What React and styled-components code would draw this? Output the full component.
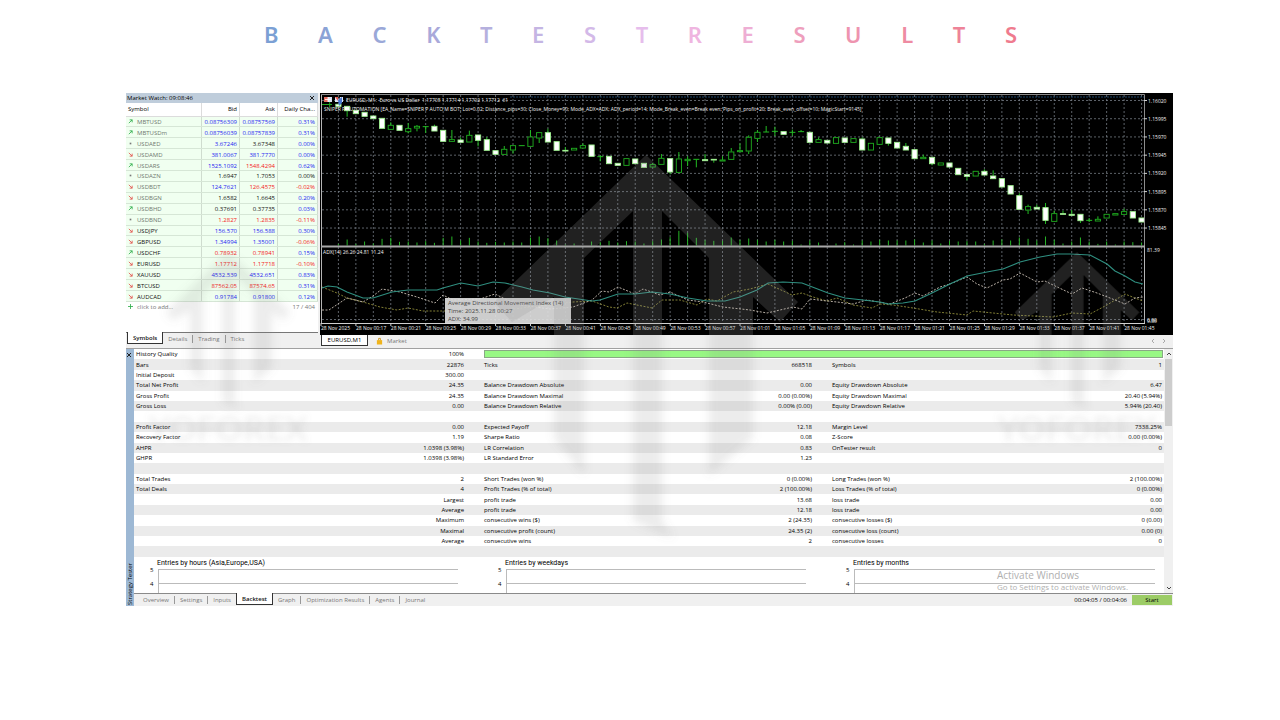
import React, { useState } from 'react'
import styled, { createGlobalStyle, css } from 'styled-components'

const titleLetters = [
  ['B', '#7ba0d4'], ['A', '#8ba3d6'], ['C', '#9aa8d8'], ['K', '#a9a9da'], ['T', '#b5b0de'],
  ['E', '#c4b5e3'], ['S', '#d3b9e8'], ['T', '#e6bdec'], ['R', '#efb5e0'], ['E', '#eeaed4'],
  ['S', '#ee9fbd'], ['U', '#ee94af'], ['L', '#ee8ba2'], ['T', '#ee8398'], ['S', '#ef7b8e'],
]

// symbol, direction, bid, ask, change, bid colour, ask colour, change colour, muted
const quotes = [
  ['MBTUSD', 'up', '0.08756309', '0.08757569', '0.31%', 'b', 'b', 'b', true],
  ['MBTUSDm', 'up', '0.08756039', '0.08757839', '0.31%', 'b', 'b', 'b', true],
  ['USDAED', 'flat', '3.67246', '3.67348', '0.00%', 'b', 'k', 'b', true],
  ['USDAMD', 'down', '381.0067', '381.7770', '0.00%', 'b', 'b', 'b', true],
  ['USDARS', 'up', '1525.1092', '1548.4294', '0.62%', 'b', 'r', 'b', true],
  ['USDAZN', 'flat', '1.6947', '1.7053', '0.00%', 'k', 'k', 'k', true],
  ['USDBDT', 'down', '124.7621', '126.4575', '-0.02%', 'b', 'r', 'r', true],
  ['USDBGN', 'down', '1.6582', '1.6645', '0.20%', 'k', 'k', 'b', true],
  ['USDBHD', 'up', '0.37691', '0.37735', '0.03%', 'k', 'k', 'b', true],
  ['USDBND', 'flat', '1.2827', '1.2835', '-0.11%', 'r', 'r', 'r', true],
  ['USDJPY', 'down', '156.570', '156.588', '0.30%', 'b', 'b', 'b'],
  ['GBPUSD', 'down', '1.34994', '1.35001', '-0.06%', 'b', 'b', 'r'],
  ['USDCHF', 'up', '0.78932', '0.78941', '0.15%', 'r', 'r', 'b'],
  ['EURUSD', 'down', '1.17712', '1.17718', '-0.10%', 'r', 'r', 'r'],
  ['XAUUSD', 'down', '4532.539', '4532.651', '0.83%', 'b', 'b', 'b'],
  ['BTCUSD', 'down', '87562.05', '87574.65', '0.31%', 'r', 'r', 'b'],
  ['AUDCAD', 'down', '0.91784', '0.91800', '0.12%', 'b', 'b', 'b'],
]

const stats = [
  ['Bars', '22876', 'Ticks', '668518', 'Symbols', '1'],
  ['Initial Deposit', '300.00', '', '', '', ''],
  ['Total Net Profit', '24.35', 'Balance Drawdown Absolute', '0.00', 'Equity Drawdown Absolute', '6.47'],
  ['Gross Profit', '24.35', 'Balance Drawdown Maximal', '0.00 (0.00%)', 'Equity Drawdown Maximal', '20.40 (5.94%)'],
  ['Gross Loss', '0.00', 'Balance Drawdown Relative', '0.00% (0.00)', 'Equity Drawdown Relative', '5.94% (20.40)'],
  ['', '', '', '', '', ''],
  ['Profit Factor', '0.00', 'Expected Payoff', '12.18', 'Margin Level', '7338.25%'],
  ['Recovery Factor', '1.19', 'Sharpe Ratio', '0.08', 'Z-Score', '0.00 (0.00%)'],
  ['AHPR', '1.0398 (3.98%)', 'LR Correlation', '0.83', 'OnTester result', '0'],
  ['GHPR', '1.0398 (3.98%)', 'LR Standard Error', '1.23', '', ''],
  ['', '', '', '', '', ''],
  ['Total Trades', '2', 'Short Trades (won %)', '0 (0.00%)', 'Long Trades (won %)', '2 (100.00%)'],
  ['Total Deals', '4', 'Profit Trades (% of total)', '2 (100.00%)', 'Loss Trades (% of total)', '0 (0.00%)'],
  ['', 'Largest', 'profit trade', '13.68', 'loss trade', '0.00'],
  ['', 'Average', 'profit trade', '12.18', 'loss trade', '0.00'],
  ['', 'Maximum', 'consecutive wins ($)', '2 (24.35)', 'consecutive losses ($)', '0 (0.00)'],
  ['', 'Maximal', 'consecutive profit (count)', '24.35 (2)', 'consecutive loss (count)', '0.00 (0)'],
  ['', 'Average', 'consecutive wins', '2', 'consecutive losses', '0'],
  ['', '', '', '', '', ''],
]

// f = filled, h = hollow, d = doji; then top, bottom, high, low
const candles = [
  ['f', 48, 56], ['f', 54, 69, 54, 86], ['f', 66, 78], ['f', 72, 86], ['f', 83, 93],
  ['f', 90, 122], ['h', 111, 125, 103], ['f', 111, 128], ['h', 121, 132, 105, 136], ['h', 114, 121, 111, 130],
  ['d', 116, 117, 114, 135], ['f', 114, 130, 110], ['f', 126, 161], ['h', 154, 161, 126], ['f', 155, 164, 148],
  ['h', 141, 163, 128], ['f', 140, 158, 140, 175], ['f', 154, 188, 147], ['f', 187, 200], ['h', 183, 200, 174],
  ['h', 172, 187, 172, 197], ['d', 173, 174], ['h', 146, 176, 126], ['h', 133, 151, 133, 165], ['f', 133, 163, 122],
  ['f', 160, 188], ['f', 186, 190, 177], ['h', 180, 187], ['h', 172, 181, 166], ['f', 170, 206],
  ['d', 206, 207, 202, 220], ['f', 204, 228], ['f', 225, 233], ['h', 211, 233], ['f', 212, 228],
  ['f', 225, 239], ['h', 229, 238, 225], ['h', 210, 230, 198], ['f', 211, 253, 211, 259], ['h', 212, 254, 192],
  ['h', 213, 219, 205, 234], ['d', 214, 215, 214, 238], ['f', 214, 219, 198], ['f', 213, 217, 213, 224], ['h', 215, 220, 205],
  ['h', 191, 215, 180], ['h', 187, 192, 166], ['h', 147, 190, 142, 198], ['h', 132, 152, 126, 162], ['d', 132, 133, 114],
  ['d', 130, 132, 116, 144], ['f', 130, 140], ['d', 133, 135, 125, 143], ['d', 131, 132, 126], ['f', 132, 164],
  ['h', 154, 164, 148], ['f', 156, 166], ['h', 148, 167], ['f', 149, 164], ['h', 151, 164],
  ['f', 152, 187, 148], ['h', 165, 187], ['h', 148, 170], ['f', 149, 167, 149, 173], ['f', 162, 181],
  ['f', 174, 187, 165], ['f', 184, 213], ['h', 207, 213, 200], ['f', 207, 228, 207, 232], ['h', 224, 232],
  ['f', 224, 238], ['f', 240, 261], ['f', 259, 266, 259, 277], ['h', 249, 265], ['f', 249, 262, 244],
  ['f', 263, 273, 247], ['f', 271, 298], ['f', 292, 319], ['f', 322, 365, 316], ['h', 355, 367, 350, 378],
  ['f', 357, 364, 350], ['f', 358, 398, 345, 408], ['h', 376, 401, 368], ['f', 376, 380, 368], ['f', 378, 383, 366],
  ['f', 378, 399, 378, 405], ['d', 397, 398, 390, 402], ['h', 393, 400, 385], ['h', 378, 391], ['h', 376, 382],
  ['h', 370, 380, 362], ['f', 370, 391], ['f', 389, 403],
]

const volumes = [
  5, 18, 5, 12, 6, 20, 23, 11, 12, 9, 13, 8, 23, 27, 15, 23, 12, 8, 11, 9, 12, 9, 24, 27, 22, 15, 3, 6, 0, 12, 10,
  14, 9, 13, 12, 6, 13, 18, 25, 44, 38, 23, 16, 14, 14, 24, 17, 21, 17, 12, 17, 12, 14, 3, 15, 9, 0, 6, 10, 3, 15,
  12, 17, 15, 15, 15, 18, 9, 15, 6, 14, 12, 13, 12, 5, 15, 18, 15, 24, 20, 15, 27, 17, 6, 12, 24, 12, 5, 12, 3, 12, 10, 9,
]

const adxLine = '2,195 8,193 17,194 27,199 43,205 53,205 72,199 88,197 117,197 123,195 141,190 158,193 173,189 185,190 202,194 213,197 230,200 245,204 272,208 280,207 298,201 315,201 332,199 350,201 368,205 387,208 405,208 420,204 437,197 448,190 463,189 482,190 508,200 525,205 543,207 560,209 568,211 583,210 595,208 610,201 630,191 647,183 667,179 683,176 700,169 720,164 737,161 750,161 770,162 787,171 795,178 805,183 815,189 823,191'
const plusLine = '2,217 9,217 18,211 27,205 43,209 53,203 62,196 80,199 97,204 115,210 123,202 133,207 160,206 175,201 183,205 200,212 230,216 253,214 272,207 282,198 289,199 298,194 315,201 323,196 340,202 350,199 368,207 383,209 403,214 430,217 447,220 473,214 482,216 490,206 507,208 517,209 533,211 547,207 570,211 585,205 595,200 603,203 620,194 630,191 647,184 657,191 667,195 683,187 690,186 700,180 717,189 725,188 733,192 752,201 762,195 777,200 790,205 805,211 815,205 823,204'
const minusLine = '2,194 7,196 17,200 27,205 43,209 60,214 77,217 88,215 103,218 125,218 170,219 210,214 253,209 272,208 289,214 297,215 307,210 332,215 342,207 360,207 377,212 387,206 397,208 413,199 430,196 448,191 472,202 482,200 493,204 507,208 517,205 533,212 552,215 560,211 573,212 593,215 617,219 647,222 653,218 693,222 733,224 752,220 770,221 787,212 805,201 815,205 823,208'

const times = [
  '28 Nov 2025', '28 Nov 00:17', '28 Nov 00:21', '28 Nov 00:25', '28 Nov 00:29', '28 Nov 00:33', '28 Nov 00:37', '28 Nov 00:41',
  '28 Nov 00:45', '28 Nov 00:49', '28 Nov 00:53', '28 Nov 00:57', '28 Nov 01:01', '28 Nov 01:05', '28 Nov 01:09', '28 Nov 01:13',
  '28 Nov 01:17', '28 Nov 01:21', '28 Nov 01:25', '28 Nov 01:29', '28 Nov 01:33', '28 Nov 01:37', '28 Nov 01:41', '28 Nov 01:45',
]
const prices = ['1.16020', '1.15995', '1.15970', '1.15945', '1.15920', '1.15895', '1.15870', '1.15845']

const candleX = i => 18.4 + i * 8.73
const candleY = v => v / 3 - 5

const PriceChart = () => (
  <ChartSvg viewBox='0 0 853 242' role='img' aria-label='EURUSD, M1'>
    <rect width='853' height='242' fill='#000' />
    <g stroke='#8a929c' strokeWidth='0.8' strokeDasharray='2 2' opacity='0.85'>
      {Array.from({ length: 47 }, (_, i) => (
        <line key={i} x1={18.4 + i * 17.46} x2={18.4 + i * 17.46} y1='2' y2='230' />
      ))}
      {prices.map((p, i) => (
        <line key={p} x1='2' x2='824' y1={7.5 + i * 18.22} y2={7.5 + i * 18.22} />
      ))}
      <line x1='2' x2='824' y1='226.5' y2='226.5' />
    </g>
    <line x1='190' x2='824' y1='4' y2='4' stroke='#1d4468' strokeDasharray='2 1' />
    <g stroke='#27b527'>
      {volumes.map((v, i) => (
        <line key={i} x1={candleX(i)} x2={candleX(i)} y1={152.5 - v / 3} y2='152.5' />
      ))}
    </g>
    <path d='M2 11.5h5M7 11.5h5M9.7 9v5' stroke='#1fa51f' />
    {candles.map(([kind, top, bottom, high = top, low = bottom], i) => (
      <g key={i} stroke='#22bb22'>
        <line x1={candleX(i)} x2={candleX(i)} y1={candleY(high)} y2={candleY(top)} />
        <line x1={candleX(i)} x2={candleX(i)} y1={candleY(bottom)} y2={candleY(low)} />
        {kind === 'd'
          ? <line x1={candleX(i) - 3} x2={candleX(i) + 3} y1={candleY(top)} y2={candleY(top)} />
          : <rect
              x={candleX(i) - 2.6}
              y={candleY(top) + 0.3}
              width='5.2'
              height={(bottom - top) / 3 - 0.6}
              fill={kind === 'f' ? '#fff' : '#000'}
              stroke={kind === 'f' ? '#9df08e' : '#1fae1f'}
              strokeWidth='0.9'
            />}
      </g>
    ))}
    <g fill='none'>
      <polyline points={minusLine} stroke='#8f8c3a' strokeDasharray='2 1.5' strokeWidth='0.9' />
      <polyline points={plusLine} stroke='#c9bfb4' strokeDasharray='2 1.5' strokeWidth='0.9' />
      <polyline points={adxLine} stroke='#2f8f80' strokeWidth='1.1' />
    </g>
    <path d='M1.5 1.5H824.5V153' fill='none' stroke='#8c8c8c' />
    <path d='M1.5 1.5V230.5M824.5 153V230.5' fill='none' stroke='#b5b5b5' />
    <path d='M1 153.5H825' stroke='#a8a8a8' strokeWidth='2' />
    <path d='M1 230.5H825' stroke='#d0d0d0' />
    <rect x='4' y='4' width='8' height='5' fill='#d7dff0' />
    <path d='M4 4h4v5h-4z' fill='#e06a5e' />
    <path d='M5 6.5h6M8 4v5' stroke='#fff' strokeWidth='0.8' />
    <path d='M15 4h3l1 3 1-3h3v5h-8z' fill='#dfe8f8' />
    <path d='M15 4l3 0v4z' fill='#e05a50' />
    <path d='M18 7l4-3v6l-3 3z' fill='#4a78d0' />
    <ChartText x='26' y='9'>EURUSD, M1:&nbsp; Euro vs US Dollar&nbsp; 1.17705 1.17714 1.17702 1.17712&nbsp; 61</ChartText>
    <ChartText x='4' y='18'>SNIPER P AUTOMATION [EA_Name=SNIPER P AUTO M BOT; Lot=0.02; Distance_pips=30; Close_Money=90; Mode_ADX=ADX; ADX_period=14; Mode_Break_even=Break even; Pips_on_profit=20; Break_even_offset=10; MagicStart=9145]</ChartText>
    <ChartText x='3' y='161'>ADX(14) 26.26 24.81 11.24</ChartText>
    {prices.map((p, i) => <ChartText key={p} x='828' y={9.5 + i * 18.22}>{p}</ChartText>)}
    <ChartText x='827' y='159'>81.39</ChartText>
    <ChartText x='827' y='229'>0.00</ChartText>
    <ChartText x='827' y='230'>9.86</ChartText>
    {times.map((t, i) => <ChartText key={t} x={1 + i * 34.92} y='237'>{t}</ChartText>)}
    <g stroke='#d0d0d0'>
      {times.map((t, i) => <line key={t} x1={1 + i * 34.92} x2={1 + i * 34.92} y1='230' y2='233' />)}
      {prices.map((p, i) => <line key={p} x1='824' x2='827' y1={7.5 + i * 18.22} y2={7.5 + i * 18.22} />)}
    </g>
  </ChartSvg>
)

const emblem = 'M0 0L152 147L134 167L107 142V283L63 320V103L16 56V366L27 383L-13 366V56L-62 103V320L-92 283V142L-134 167L-152 147Z'

const Emblems = () => (
  <>
    <path d={emblem} transform='translate(520 62)' />
    <path d={emblem} transform='translate(102 159) scale(0.41)' />
    <path d={emblem} transform='translate(951 159) scale(0.41)' />
  </>
)

const Watermark = () => (
  <WatermarkSvg viewBox='0 0 1047 513' aria-hidden='true'>
    <defs>
      <filter id='crisp'><feGaussianBlur stdDeviation='0.6' /></filter>
      <filter id='soft'><feGaussianBlur stdDeviation='4' /></filter>
      <filter id='softText'><feGaussianBlur stdDeviation='3' /></filter>
      <clipPath id='onChart'><rect x='194' width='853' height='242' /></clipPath>
      <clipPath id='offChart'><path d='M0 0H194V242H1047V513H0Z' /></clipPath>
    </defs>
    <g clipPath='url(#onChart)'>
      <g fill='#969696' fillOpacity='0.22' filter='url(#crisp)'><Emblems /></g>
    </g>
    <g clipPath='url(#offChart)'>
      <g fill='#808080' fillOpacity='0.15' filter='url(#soft)'><Emblems /></g>
    </g>
    <g filter='url(#softText)'>
      <MarkText x='102' y='348'>YOFOREX</MarkText>
      <MarkText x='951' y='348'>YOFOREX</MarkText>
    </g>
  </WatermarkSvg>
)

const Trend = ({ dir }) => (
  <TrendSvg viewBox='0 0 6 6' aria-hidden='true'>
    {dir === 'up' && <path d='M1 5L5 1M2 1H5V4' stroke='#2fae4a' />}
    {dir === 'down' && <path d='M1 1L5 5M5 2V5H2' stroke='#e2524a' />}
    {dir === 'flat' && <path d='M2 3H4' stroke='#777' strokeWidth='2' />}
  </TrendSvg>
)

const MarketWatch = () => {
  const [tab, setTab] = useState('Symbols')

  return (
    <Watch>
      <WatchTitle>
        Market Watch: 09:08:46
        <CloseBtn aria-label='Close Market Watch'><Cross /></CloseBtn>
      </WatchTitle>
      <QuoteTable>
        <thead>
          <tr><QuoteHead>Symbol</QuoteHead><QuoteHead $w={38}>Bid</QuoteHead><QuoteHead $w={38}>Ask</QuoteHead><QuoteHead $w={40}>Daily Cha...</QuoteHead></tr>
        </thead>
        <tbody>
          {quotes.map(([symbol, dir, bid, ask, change, bc, ac, cc, muted]) => (
            <tr key={symbol}>
              <SymbolCell $muted={muted}><Trend dir={dir} />{symbol}</SymbolCell>
              <QuoteCell $tone={bc}>{bid}</QuoteCell>
              <QuoteCell $tone={ac}>{ask}</QuoteCell>
              <QuoteCell $tone={cc}>{change}</QuoteCell>
            </tr>
          ))}
        </tbody>
      </QuoteTable>
      <AddRow>
        <AddBtn>
          <TrendSvg viewBox='0 0 6 6' aria-hidden='true'><path d='M0 3H6M3 0V6' stroke='#2fae4a' /></TrendSvg>
          click to add...
        </AddBtn>
        <span>17 / 404</span>
      </AddRow>
      <TabBar>
        {['Symbols', 'Details', 'Trading', 'Ticks'].map(t => (
          <Tab key={t} $active={tab === t} onClick={() => setTab(t)}>{t}</Tab>
        ))}
      </TabBar>
    </Watch>
  )
}

const Cross = () => (
  <CrossSvg viewBox='0 0 6 6' aria-hidden='true'><path d='M1 1L5 5M5 1L1 5' /></CrossSvg>
)

const Tester = () => {
  const [tab, setTab] = useState('Backtest')

  return (
    <TesterPanel>
      <Strip>
        <CloseBtn aria-label='Close Strategy Tester'><Cross /></CloseBtn>
        <StripLabel>Strategy Tester</StripLabel>
      </Strip>
      <TesterMain>
        <Report>
          <ReportBody>
            <StatTable>
              <colgroup>
                <col /><StatCol $w={160} /><col /><StatCol $w={160} /><col /><StatCol $w={146} />
              </colgroup>
              <tbody>
                <tr>
                  <StatLabel>History Quality</StatLabel>
                  <StatValue>100%</StatValue>
                  <StatLabel colSpan={4}><Quality /></StatLabel>
                </tr>
                {stats.map((row, i) => (
                  <tr key={i}>
                    {row.map((cell, j) => (
                      j % 2 ? <StatValue key={j}>{cell}</StatValue> : <StatLabel key={j}>{cell}</StatLabel>
                    ))}
                  </tr>
                ))}
              </tbody>
            </StatTable>
            <Entries>
              {['Entries by hours (Asia,Europe,USA)', 'Entries by weekdays', 'Entries by months'].map(name => (
                <Entry key={name}>
                  <EntryTitle>{name}</EntryTitle>
                  <Level>5</Level>
                  <Level>4</Level>
                </Entry>
              ))}
            </Entries>
            <Activate>
              <ActivateTitle>Activate Windows</ActivateTitle>
              Go to Settings to activate Windows.
            </Activate>
          </ReportBody>
          <ScrollBar>
            <ArrowSvg viewBox='0 0 6 6' aria-hidden='true'><path d='M1 4L3 2L5 4' /></ArrowSvg>
            <Thumb />
            <ArrowSvg viewBox='0 0 6 6' aria-hidden='true'><path d='M1 2L3 4L5 2' /></ArrowSvg>
          </ScrollBar>
        </Report>
        <Footer>
          <TabBar $inset>
            {['Overview', 'Settings', 'Inputs', 'Backtest', 'Graph', 'Optimization Results', 'Agents', 'Journal'].map(t => (
              <Tab key={t} $active={tab === t} onClick={() => setTab(t)}>{t}</Tab>
            ))}
          </TabBar>
          <Elapsed>00:04:05 / 00:04:06</Elapsed>
          <StartBtn>Start</StartBtn>
        </Footer>
      </TesterMain>
    </TesterPanel>
  )
}

const App = () => (
  <Page>
    <GlobalStyle />
    <Title>
      {titleLetters.map(([letter, color], i) => <Letter key={i} $color={color}>{letter}</Letter>)}
    </Title>
    <Terminal>
      <Upper>
        <MarketWatch />
        <ChartPane>
          <PriceChart />
          <ChartTabs>
            <ChartTab>EURUSD,M1</ChartTab>
            <MarketBtn>
              <BagSvg viewBox='0 0 8 8' aria-hidden='true'>
                <path d='M1 3h6v5H1z' fill='#f0b41c' />
                <path d='M3 3V1h2v2' fill='none' stroke='#c98f10' />
              </BagSvg>
              Market
            </MarketBtn>
            <Pager>
              <ArrowSvg $faint viewBox='0 0 6 6' aria-hidden='true'><path d='M4 1L2 3L4 5' /></ArrowSvg>
              <ArrowSvg $faint viewBox='0 0 6 6' aria-hidden='true'><path d='M2 1L4 3L2 5' /></ArrowSvg>
            </Pager>
          </ChartTabs>
          <Tooltip>
            Average Directional Movement Index (14)<br />
            Time: 2025.11.28 00:27<br />
            ADX: 34.99
          </Tooltip>
        </ChartPane>
      </Upper>
      <Tester />
      <Watermark />
    </Terminal>
  </Page>
)

const tones = { b: '#1c1cf0', r: '#f42020', k: '#111' }

const GlobalStyle = createGlobalStyle`
  * {
    box-sizing: border-box;
  }
  body {
    margin: 0;
    background: #fff;
    font-family: 'Open Sans', 'Noto Sans', sans-serif;
    font-size: 6px;
    line-height: 8px;
    color: #000;
  }
  button {
    font: inherit;
    color: inherit;
    background: none;
    border: 0;
    padding: 0;
  }
`

const Page = styled.main`
  padding: 19px 107px 0 126px;
`

const Title = styled.h1`
  display: flex;
  justify-content: space-between;
  margin: 0 156px 44px 138px;
  font-family: 'Noto Sans', sans-serif;
  font-size: 22px;
  font-weight: 600;
  line-height: 30px;
`

const Letter = styled.span`
  color: ${p => p.$color};
`

const Terminal = styled.section`
  position: relative;
  background: #f0f0f0;
`

const Upper = styled.div`
  display: grid;
  grid-template-columns: 192px 1fr;
  gap: 2px;
  border-bottom: 1px solid #a0a0a0;
`

const Watch = styled.section`
  display: flex;
  flex-direction: column;
  background: #fff;
`

const WatchTitle = styled.header`
  display: flex;
  justify-content: space-between;
  align-items: center;
  height: 10px;
  padding: 0 3px 0 1px;
  background: #bfcddb;
`

const CloseBtn = styled.button`
  display: flex;
`

const CrossSvg = styled.svg`
  width: 6px;
  height: 6px;
  fill: none;
  stroke: #222;
`

const QuoteTable = styled.table`
  width: 100%;
  height: 199px;
  table-layout: fixed;
  border-collapse: collapse;
`

const QuoteHead = styled.th`
  width: ${p => (p.$w ? `${p.$w}px` : 'auto')};
  height: 13px;
  padding: 0 2px;
  border-right: 1px solid #dcdcdc;
  border-bottom: 1px solid #dcdcdc;
  font-weight: 400;
  text-align: right;
  white-space: nowrap;
  &:first-child {
    text-align: left;
  }
`

const QuoteCell = styled.td`
  padding: 1px 2px 0;
  border-right: 1px solid #cfdccf;
  border-bottom: 1px solid #d6e6d6;
  background: #f0fff0;
  color: ${p => tones[p.$tone]};
  text-align: right;
`

const SymbolCell = styled(QuoteCell)`
  color: ${p => (p.$muted ? '#6f786f' : '#111')};
  text-align: left;
`

const TrendSvg = styled.svg`
  width: 5px;
  height: 5px;
  margin-right: 4px;
  fill: none;
`

const AddRow = styled.div`
  display: flex;
  flex: 1;
  justify-content: space-between;
  align-items: flex-start;
  padding: 1px 3px 0 2px;
  color: #777;
`

const AddBtn = styled.button`
  padding: 0;
`

const TabBar = styled.nav`
  display: flex;
  align-items: flex-start;
  height: ${p => (p.$inset ? '12px' : '16px')};
  padding-left: ${p => (p.$inset ? '4px' : '2px')};
  border-top: ${p => (p.$inset ? '0' : '1px solid #777')};
  background: #f0f0f0;
`

const Tab = styled.button`
  padding: 0 5px;
  height: 8px;
  margin-top: 2px;
  line-height: 8px;
  color: #777;
  border-right: 1px solid #999;
  &:last-child {
    border-right: 0;
  }
  ${p => p.$active && css`
    height: 12px;
    margin: -1px 0 0 -1px;
    padding: 0 5px;
    background: #fff;
    color: #111;
    font-weight: 600;
    border: 1px solid #333;
    border-top: 0;
  `}
`

const ChartPane = styled.div`
  position: relative;
  display: flex;
  flex-direction: column;
`

const ChartSvg = styled.svg`
  display: block;
  width: 100%;
`

const ChartText = styled.text`
  font-family: 'Open Sans', sans-serif;
  font-size: 5px;
  font-weight: 500;
  fill: #f0f0f0;
`

const ChartTabs = styled.nav`
  display: flex;
  align-items: flex-start;
  gap: 8px;
  height: 13px;
  padding: 0 6px 0 1px;
`

const ChartTab = styled.button`
  width: 47px;
  height: 11px;
  background: #fff;
  border: 1px solid #333;
  border-top: 0;
`

const MarketBtn = styled.button`
  display: flex;
  gap: 4px;
  margin-top: 2px;
  color: #777;
`

const BagSvg = styled.svg`
  width: 7px;
  height: 8px;
`

const Pager = styled.div`
  display: flex;
  gap: 5px;
  margin: 3px 0 0 auto;
`

const ArrowSvg = styled.svg`
  width: 6px;
  height: 6px;
  fill: none;
  stroke: ${p => (p.$faint ? '#aaa' : '#444')};
`

const Tooltip = styled.div`
  position: absolute;
  left: 125px;
  top: 205px;
  width: 126px;
  padding: 1px 3px;
  background: rgba(222, 222, 222, 0.92);
  color: #444;
  white-space: nowrap;
`

const TesterPanel = styled.section`
  display: flex;
  background: #fff;
`

const Strip = styled.aside`
  display: flex;
  flex-direction: column;
  justify-content: space-between;
  width: 8px;
  padding: 3px 0 1px 0;
  background: #9db8d4;
`

const StripLabel = styled.span`
  writing-mode: vertical-rl;
  transform: rotate(180deg);
`

const TesterMain = styled.div`
  flex: 1;
  min-width: 0;
`

const Report = styled.div`
  display: flex;
  border-bottom: 1px solid #8a8a8a;
`

const ReportBody = styled.div`
  position: relative;
  flex: 1;
`

const StatTable = styled.table`
  width: 100%;
  height: 208px;
  table-layout: fixed;
  border-collapse: collapse;
  tr:nth-child(even) {
    background: #ebebeb;
  }
  td {
    height: 10px;
  }
`

const StatCol = styled.col`
  width: ${p => p.$w}px;
`

const StatLabel = styled.td`
  padding: 0 0 0 2px;
  white-space: nowrap;
`

const StatValue = styled.td`
  padding: 0 18px 0 0;
  text-align: right;
  &:last-child {
    padding-right: 2px;
  }
`

const Quality = styled.div`
  height: 8px;
  margin-right: 1px;
  border: 1px solid #8aa886;
  background: #98f884;
`

const Entries = styled.div`
  display: grid;
  grid-template-columns: 348fr 348fr 334fr;
`

const Entry = styled.div`
  height: 36px;
  overflow: hidden;
  padding: 1px 24px 0 14px;
  &:last-child {
    padding-right: 9px;
  }
`

const EntryTitle = styled.div`
  padding-left: 9px;
  height: 11px;
  font-family: Roboto, sans-serif;
  font-size: 7px;
  line-height: 11px;
`

const Level = styled.div`
  height: 14px;
  margin-left: 10px;
  border-top: 1px solid #bbb;
  border-left: 1px solid #bbb;
  line-height: 1px;
  text-indent: -9px;
`

const Activate = styled.div`
  position: absolute;
  right: 36px;
  bottom: 1px;
  font-size: 8px;
  line-height: 10px;
  color: #b0b0b0;
`

const ActivateTitle = styled.div`
  font-size: 10px;
  line-height: 14px;
`

const ScrollBar = styled.div`
  display: flex;
  flex-direction: column;
  align-items: center;
  width: 9px;
  padding: 2px 0;
  background: #f0f0f0;
`

const Thumb = styled.div`
  width: 7px;
  height: 67px;
  margin: 2px 0 auto;
  background: #cdcdcd;
`

const Footer = styled.footer`
  display: flex;
  align-items: flex-start;
  height: 12px;
  background: #f0f0f0;
`

const Elapsed = styled.span`
  margin: 2px 5px 0 auto;
`

const StartBtn = styled.button`
  width: 40px;
  height: 10px;
  margin: 1px 1px 0 0;
  background: #9ccc66;
`

const MarkText = styled.text`
  font-family: Lato, sans-serif;
  font-size: 34px;
  font-weight: 900;
  text-anchor: middle;
  fill: rgba(128, 128, 128, 0.12);
`

const WatermarkSvg = styled.svg`
  position: absolute;
  inset: 0;
  width: 100%;
  pointer-events: none;
`

export default App
